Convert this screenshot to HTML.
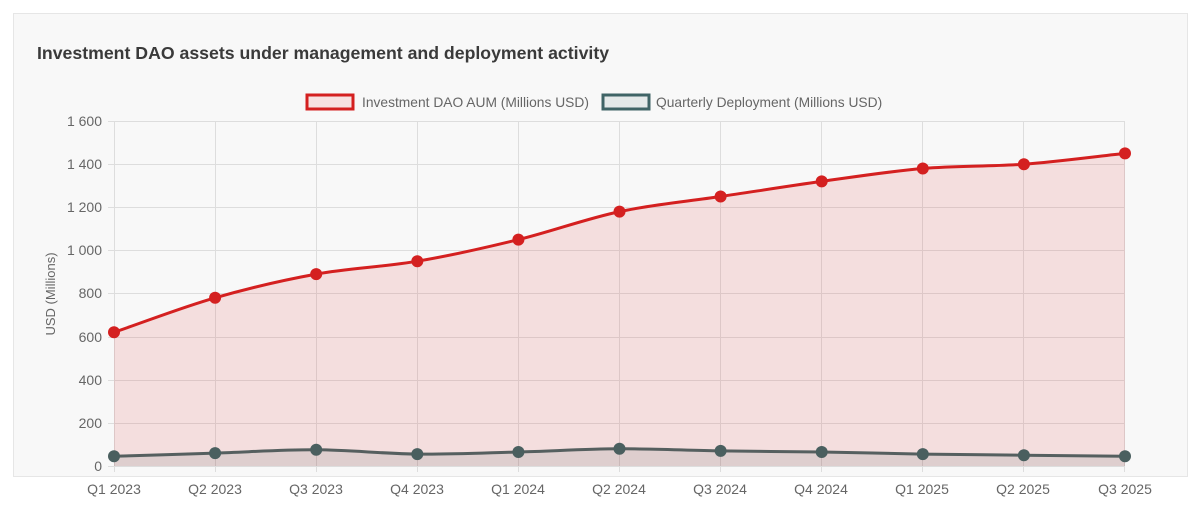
<!DOCTYPE html>
<html><head><meta charset="utf-8"><style>
body{margin:0;background:#fff;width:1200px;height:509px;overflow:hidden;font-family:"Liberation Sans",sans-serif;}
.card{position:absolute;left:13px;top:13px;width:1173px;height:462px;background:#f8f8f8;border:1px solid #e6e6e6;}
h1{position:absolute;left:37px;top:43px;margin:0;font-size:17.7px;font-weight:bold;color:#3a3a3a;font-family:"Liberation Sans",sans-serif;}
svg{position:absolute;left:0;top:0}
</style></head><body>
<div class="card"></div>
<h1>Investment DAO assets under management and deployment activity</h1>
<svg width="1200" height="509" font-family="Liberation Sans, sans-serif" font-size="13.8" fill="#666">
<rect x="307" y="95" width="46" height="14" fill="#f7e1e1" stroke="#d42020" stroke-width="3"/>
<text x="362" y="107">Investment DAO AUM (Millions USD)</text>
<rect x="603" y="95" width="46" height="14" fill="#e4e9e9" stroke="#3f6466" stroke-width="3"/>
<text x="656" y="107">Quarterly Deployment (Millions USD)</text>
<g stroke="#ddd" stroke-width="1">
<line x1="108" y1="121.5" x2="1125" y2="121.5"/><line x1="108" y1="164.5" x2="1125" y2="164.5"/><line x1="108" y1="207.5" x2="1125" y2="207.5"/><line x1="108" y1="250.5" x2="1125" y2="250.5"/><line x1="108" y1="293.5" x2="1125" y2="293.5"/><line x1="108" y1="337.5" x2="1125" y2="337.5"/><line x1="108" y1="380.5" x2="1125" y2="380.5"/><line x1="108" y1="423.5" x2="1125" y2="423.5"/><line x1="108" y1="466.5" x2="1125" y2="466.5"/>
<line x1="114.5" y1="121" x2="114.5" y2="472"/><line x1="215.5" y1="121" x2="215.5" y2="472"/><line x1="316.5" y1="121" x2="316.5" y2="472"/><line x1="417.5" y1="121" x2="417.5" y2="472"/><line x1="518.5" y1="121" x2="518.5" y2="472"/><line x1="619.5" y1="121" x2="619.5" y2="472"/><line x1="720.5" y1="121" x2="720.5" y2="472"/><line x1="821.5" y1="121" x2="821.5" y2="472"/><line x1="922.5" y1="121" x2="922.5" y2="472"/><line x1="1023.5" y1="121" x2="1023.5" y2="472"/><line x1="1124.5" y1="121" x2="1124.5" y2="472"/>
</g>
<g text-anchor="end" font-size="14">
<text x="102" y="126">1 600</text><text x="102" y="169">1 400</text><text x="102" y="212">1 200</text><text x="102" y="255">1 000</text><text x="102" y="298">800</text><text x="102" y="342">600</text><text x="102" y="385">400</text><text x="102" y="428">200</text><text x="102" y="471">0</text>
</g>
<text transform="translate(55,294) rotate(-90)" text-anchor="middle" font-size="13">USD (Millions)</text>
<g text-anchor="middle" font-size="14">
<text x="114" y="494">Q1 2023</text><text x="215" y="494">Q2 2023</text><text x="316" y="494">Q3 2023</text><text x="417" y="494">Q4 2023</text><text x="518" y="494">Q1 2024</text><text x="619" y="494">Q2 2024</text><text x="720" y="494">Q3 2024</text><text x="821" y="494">Q4 2024</text><text x="922" y="494">Q1 2025</text><text x="1023" y="494">Q2 2025</text><text x="1125" y="494">Q3 2025</text>
</g>
<path fill="rgba(220,40,40,0.12)" d="M114,332.3 C147.7,320.8 181.4,307.5 215.1,297.8 C248.8,288.1 282.5,280.2 316.2,274.1 C349.9,268 383.6,267 417.3,261.2 C451,255.5 484.7,247.9 518.4,239.6 C552.1,231.3 585.8,218.8 619.5,211.6 C653.2,204.4 686.9,201.5 720.6,196.5 C754.3,191.5 788,186.1 821.7,181.4 C855.4,176.7 889.1,171.4 922.8,168.5 C956.5,165.6 990.2,166.7 1023.9,164.2 C1057.6,161.7 1091.3,157 1125,153.4 L1125,466 L114,466 Z"/>
<path fill="rgba(63,90,90,0.12)" d="M114,456.3 C147.7,455.2 181.4,454.2 215.1,453.1 C248.8,452 282.5,449.6 316.2,449.8 C349.9,450 383.6,453.7 417.3,454.1 C451,454.5 484.7,452.9 518.4,452 C552.1,451.1 585.8,449 619.5,448.8 C653.2,448.6 686.9,450.4 720.6,450.9 C754.3,451.4 788,451.5 821.7,452 C855.4,452.5 889.1,453.6 922.8,454.1 C956.5,454.6 990.2,454.8 1023.9,455.2 C1057.6,455.6 1091.3,455.9 1125,456.3 L1125,466 L114,466 Z"/>
<path fill="none" stroke="#d42020" stroke-width="3" d="M114,332.3 C147.7,320.8 181.4,307.5 215.1,297.8 C248.8,288.1 282.5,280.2 316.2,274.1 C349.9,268 383.6,267 417.3,261.2 C451,255.5 484.7,247.9 518.4,239.6 C552.1,231.3 585.8,218.8 619.5,211.6 C653.2,204.4 686.9,201.5 720.6,196.5 C754.3,191.5 788,186.1 821.7,181.4 C855.4,176.7 889.1,171.4 922.8,168.5 C956.5,165.6 990.2,166.7 1023.9,164.2 C1057.6,161.7 1091.3,157 1125,153.4"/>
<path fill="none" stroke="#555f5f" stroke-width="3" d="M114,456.3 C147.7,455.2 181.4,454.2 215.1,453.1 C248.8,452 282.5,449.6 316.2,449.8 C349.9,450 383.6,453.7 417.3,454.1 C451,454.5 484.7,452.9 518.4,452 C552.1,451.1 585.8,449 619.5,448.8 C653.2,448.6 686.9,450.4 720.6,450.9 C754.3,451.4 788,451.5 821.7,452 C855.4,452.5 889.1,453.6 922.8,454.1 C956.5,454.6 990.2,454.8 1023.9,455.2 C1057.6,455.6 1091.3,455.9 1125,456.3"/>
<g fill="#d42020">
<circle cx="114" cy="332.3" r="6"/><circle cx="215.1" cy="297.8" r="6"/><circle cx="316.2" cy="274.1" r="6"/><circle cx="417.3" cy="261.2" r="6"/><circle cx="518.4" cy="239.6" r="6"/><circle cx="619.5" cy="211.6" r="6"/><circle cx="720.6" cy="196.5" r="6"/><circle cx="821.7" cy="181.4" r="6"/><circle cx="922.8" cy="168.5" r="6"/><circle cx="1023.9" cy="164.2" r="6"/><circle cx="1125" cy="153.4" r="6"/>
</g>
<g fill="#4a5f5f">
<circle cx="114" cy="456.3" r="6"/><circle cx="215.1" cy="453.1" r="6"/><circle cx="316.2" cy="449.8" r="6"/><circle cx="417.3" cy="454.1" r="6"/><circle cx="518.4" cy="452" r="6"/><circle cx="619.5" cy="448.8" r="6"/><circle cx="720.6" cy="450.9" r="6"/><circle cx="821.7" cy="452" r="6"/><circle cx="922.8" cy="454.1" r="6"/><circle cx="1023.9" cy="455.2" r="6"/><circle cx="1125" cy="456.3" r="6"/>
</g>
</svg>
</body></html>
